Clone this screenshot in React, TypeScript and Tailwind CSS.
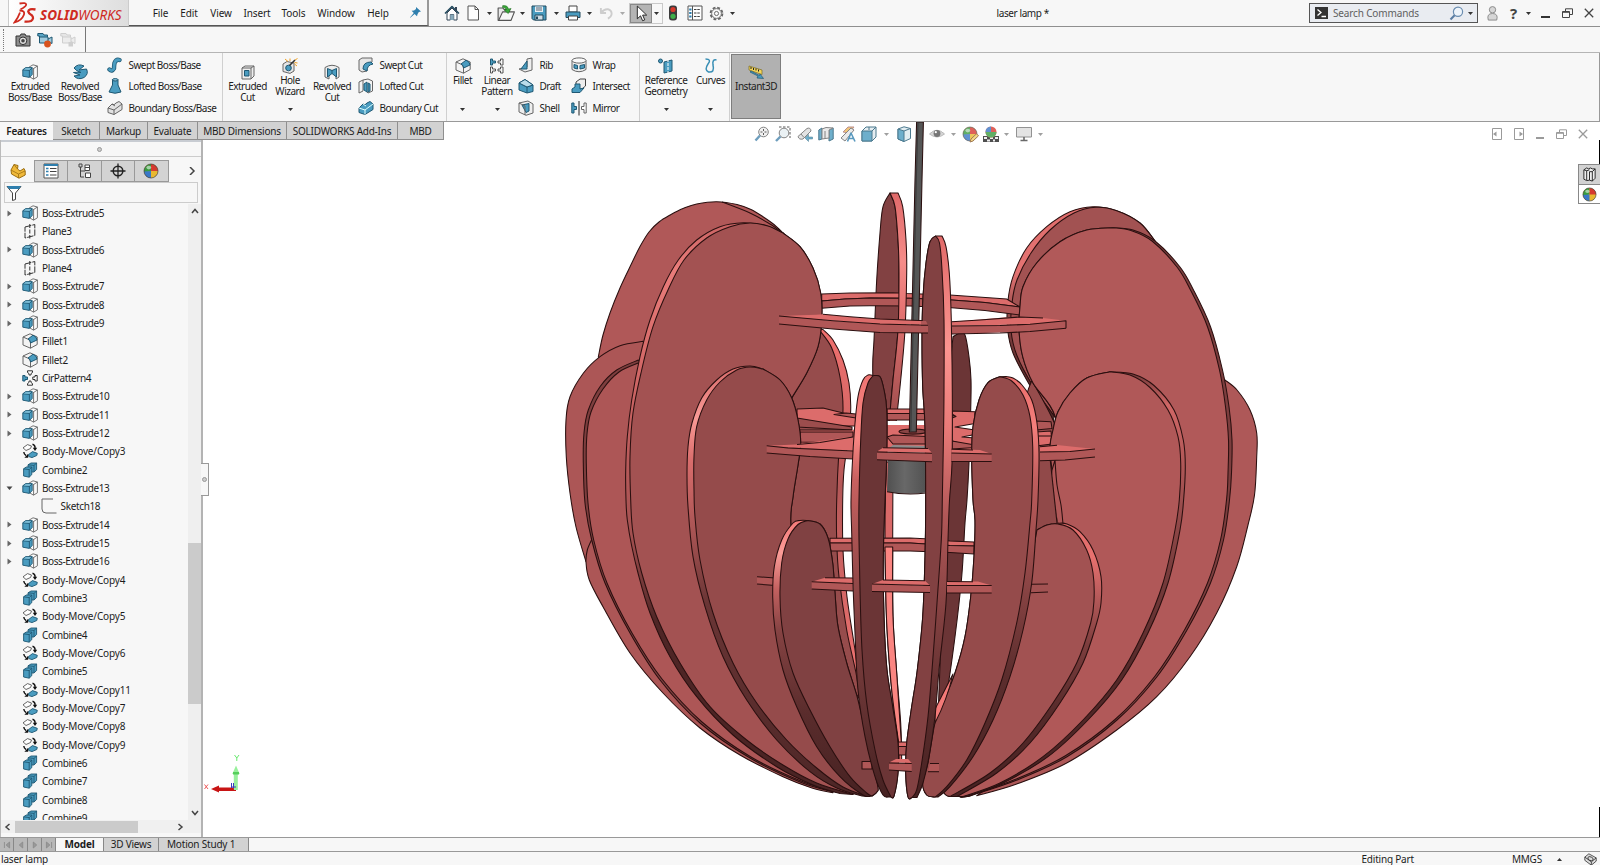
import React from "react";

type Pt = [number, number];

const parse = (s: string): Pt[] =>
  s.trim().split(/\s+/).map((p) => p.split(",").map(Number) as Pt);

/* Catmull-Rom spline through the points, as cubic segments. */
const spline = (p: Pt[], first: "M" | "L") => {
  let d = `${first}${p[0][0]} ${p[0][1]}`;
  for (let i = 0; i < p.length - 1; i++) {
    const a = p[Math.max(i - 1, 0)];
    const b = p[i];
    const c = p[i + 1];
    const e = p[Math.min(i + 2, p.length - 1)];
    const n = (v: number) => v.toFixed(1);
    d += `C${n(b[0] + (c[0] - a[0]) / 6)} ${n(b[1] + (c[1] - a[1]) / 6)} ${n(c[0] - (e[0] - b[0]) / 6)} ${n(c[1] - (e[1] - b[1]) / 6)} ${c[0]} ${c[1]}`;
  }
  return d;
};

/* Region between two curves that both run top to bottom. */
const Area = ({ a, b, fill }: { a: string; b: string; fill: string }) => (
  <path d={spline(parse(a), "M") + spline(parse(b).reverse(), "L") + "Z"} fill={fill} />
);
const Curve = ({ p }: { p: string }) => <path d={spline(parse(p), "M")} fill="none" />;
const Poly = ({ p, fill, line = false }: { p: string; fill: string; line?: boolean }) => (
  <polygon points={p} fill={fill} stroke={line ? "#2a0f0f" : "none"} />
);
const Ln = ({ p }: { p: string }) => <polyline points={p} fill="none" />;

const Grad = ({ id, stops, y1, y2 }: { id: string; stops: [number, string][]; y1: number; y2: number }) => (
  <linearGradient id={id} gradientUnits="userSpaceOnUse" x1="0" x2="0" y1={y1} y2={y2}>
    {stops.map(([o, c]) => (
      <stop key={o} offset={o} stopColor={c} />
    ))}
  </linearGradient>
);

const TOP = "#dc6c6b";
const SIDE = "#b05757";

const L1 = "783,233 774,224.5 763,216.7 751,209.5 737,204.5 716.7,201.7 696.7,204 683,208.5 671,214.5 659,222 649,232 640,246.5 631.7,263.3 620,288 610,313 603,335 598.3,357";
const L2 = "643,341.3 620,345.7 600,356.7 583.3,373.3 570,396.7 566,420 566.3,457 570,493 576,527 586,561.7";
const L0 = "592.3,538.3 587.3,550 586,562 589.3,580 603,606.7 630,653 663,693 700,728 740,755 783,776.7 812,788 833,792.7";
const L3o = "638.3,360 616.7,370 600,386.7 588.3,410 584,433 583.3,463 585,503 591.7,540 605,583 630,633 660,680 700,723 750,758 800,782 833,792";
const L3i = "638.3,363 619,372 603,389 591,412 587,434 586.3,463 588,503 593.7,540 607,583 632,633 662,679 702,722 751,757 801,781 836,792";
const L4o = "783,233 765,225.5 743.3,222.7 720,226.7 696.7,240 678.3,260 663.3,286.7 650,320 640,356.7 631.7,400 627.3,436.7 625.7,470 626,500 627.3,520 631.7,546 638,573 650,613 670,656.7 696.7,696.7 733,735 776.7,766.7 813,785 840,793.5";
const L4i = "783,233 768,226 750,223 730,226.7 706.7,238 684,260 668,290 653,326.7 641.7,370 633,413 630,456.7 630.7,500 633,533 641.7,573 656.7,616.7 680,663 710,706.7 746.7,740 783,765 816.7,783 853,794.5";
const L4r = "783,233 800,246.7 813,268 820.7,293 821.7,320 818,346.7 806.7,373 791.7,398 776,425 776,520 800,620 830,720 853,794.5";
const BLo = "823,329.5 833,340 843,360 849,383 850.7,410 848,440 844,470 842.7,500 843,550 847,596.7 855,650 860,690";
const BLi = "820,331 831.7,348 840,377 843,410 839,450 836.7,500 836.7,540 839,576.7 846.7,630 856,673 860,700";
const L5o = "763,369 750,366 733,369 716.7,380 701.7,398 692,423 688,446.7 687,475 688,506.7 693,556.7 705,606.7 723,656.7 746.7,700 776.7,740 810,771.7 836.7,788 862,796";
const L5i = "763,369 750,367 736.7,370 720,382 706.7,400 696.7,426.7 694,456.7 694,490 695,516.7 700,560 713,613 733,663 756.7,703 786.7,740 816.7,768 843,787 868,796.5";
const L5r = "763,369 780,380 791.7,398 798,420 800.7,443 798,465 793,497 791,527 800,600 830,700 868,796.5";
const L6o = "808,520.5 800,520.5 793,523 781.7,540 774.3,566.7 772.7,597 775,630 783,670 796.7,706.7 816.7,746.7 840,776.7 863,795 872,796";
const L6i = "808,520.5 798,524.5 788,539 781.7,563 780,597 783,633 793,673 810,710 830,746.7 850,776.7 866.7,793 872,796";
const L6r = "808,520.5 820,524 828,538 832.7,563 835,593 838,626.7 846.7,663 858,700 868,745 877.5,785 877,791.7 872,796";
const C1o = "873,375.5 868,375 863,380 858,396.7 855,423 852.7,456.7 851,500 851.7,533 853,583 855,633 858,690 865,736.7 875,776.7 883,795 889,797";
const C1i = "873,375.7 868,383 863,403 860.7,440 859,500 859,540 860,590 862,650 866.7,703 875,750 883,780 891,797";
const C1r = "873,375.7 880,376.7 884,390 886.7,410 886.7,456.7 885,500 883.3,556.7 884,616.7 887,670 892.7,706.7 898,743 898,773 894,796 891,797";
const BTl = "890,193 883,206.7 880,233 876.7,280 874,340 872.7,367 874,420";
const BTm = "890,193 895,206.7 898,240 899,273 898,330 893,380 889,423";
const BTr = "898,193 902.7,206.7 906,240 906.7,273 905,330 900.7,380 896,423";
const C2l = "935.5,236 930,241.7 926,263 923,296.7 922,340 922.7,386.7 925,426.7 925.7,500 925,556.7 922.7,616.7 917.3,670 911.7,706.7 906.7,743 905.7,773 908,797 912,797.5";
const C2m = "935.5,236 939.5,243 942,270 944,320 944,393 943.3,446.7 942.3,500 941.3,540 937,603 932,670 928,716.7 921.7,763 916.7,790 912,797.5";
const C2r = "942,236 946,246.7 949.3,273 951.3,320 952.3,393 952,463 949.5,500 948,540 946,603 939,670 935,716.7 929,756.7 923,783 917,797.5";
const C3 = "953,336.7 960,333 965,335 969,356.7 971,380 970.7,410 969,463 967,500 965,523 961.7,576.7 955,636.7 946.7,693 938,718";
const R5l = "1000,376.7 988,382.7 979,400 973,426.7 971.7,456.7 973,500 975,520 974,556.7 970.7,596.7 965,636.7 955,673 941.7,706.7 935,723 928,763 922.7,783 926.7,795 935,797";
const R5m = "1000,376.7 1011.7,381 1023,395 1030,416.7 1032.7,446.7 1031.7,500 1030,523 1025,573 1016.7,623 1001.7,680 985,723 966.7,760 946.7,786.7 935,797";
const R5r = "1006,376.5 1013,378 1022,385 1031.7,400 1037,423 1039,453 1038,500 1036,530 1031.7,583 1023,630 1010,676.7 993,720 973,756.7 950,786.7 938,797";
const R4b = "1037,530 1015,640 980,730 955,770 943,788 946,795 950,796.5";
const R4m = "1037,530 1047,525 1058,524 1073,530 1086.7,550 1093,573 1094,600 1090.7,623 1076.7,663 1053,703 1023,743 990,773 950,796.5";
const R4r = "1037,530 1047,525 1058,523.3 1067,524 1080,531.7 1093,550 1101,576.7 1101,603 1096.7,623 1083,663 1060,703 1030,743 996.7,773 957,796.5";
const R3l = "1110,371.7 1086.7,378 1070,393 1058,411.7 1053,430 1050,446.7 1052,470 1056,500 1057.7,525 1030,700 975,775 953,794 963,796.5";
const R3m = "1110,371.7 1130,375 1150,387.5 1168,410 1178,436.7 1180.7,463 1179.3,500 1175,530 1163,583 1143,633 1116.7,680 1083,720 1043,756.7 1000,783 963,796.5";
const R3r = "1110,371.7 1133,374 1154,385.5 1174,410 1183.3,440 1185.3,466.7 1183.6,500 1180,530 1168,583 1148,633 1121.7,680 1088,720 1048,756.7 1003,783 967,796.5";
const R2l = "1113,227.7 1086.7,230 1060,241.7 1036.7,263 1023,286.7 1020,306.7 1019,330 1022.7,356.7 1033,383 1055,416 1060,470 1050,640 985,770 960,795 970,796";
const R2r = "1113,227.7 1133,230 1155,241 1180,267 1193.5,290 1210.5,326.7 1222.5,370 1229,406.7 1232,440 1231.5,473 1229.5,500 1223.5,540 1210.5,583 1187,630 1157,676.7 1117,720 1067,756.7 1017,780 970,796";
const R2m = "1113,227.7 1131,230.5 1152,241 1177,267 1190.5,290 1207.5,326.7 1219.5,370 1225.5,406.7 1228.5,440 1228,473 1226.5,500 1220.5,540 1207.5,583 1184.5,630 1154.5,676.7 1115,719.5 1065,756 1015,779.5 968,796";
const R1 = "1225,380 1237,390 1250,410 1256.7,433 1256.7,457 1254.5,495 1248,525 1236.7,566.7 1216.7,613 1190,656.7 1156.7,696.7 1116.7,730 1066.7,763 1016.7,784 976.7,795.7";
const R0o = "1155,241 1140,223 1116.7,210.7 1093,206.7 1070,211.7 1046.7,226.7 1026.7,248 1013,276.7 1007.7,303 1007.7,330 1013,353 1026.7,380 1043,406.7 1053,426.7";
const R0i = "1155,241 1140,223 1116.7,210.7 1096,207.3 1074,213 1050,230 1031,253 1017,280 1012,303 1011,330 1016.7,355 1033,386 1055,417";

const Lamp = () => (
  <svg className="absolute inset-0 h-full w-full" viewBox="203 122 1397 715" preserveAspectRatio="none">
    <defs>
      <Grad id="eTop" y1={193} y2={423} stops={[[0, "#e06a6a"], [0.3, "#f58c89"], [0.5, "#e67473"], [1, "#9c4b4b"]]} />
      <Grad id="eL4" y1={222} y2={793} stops={[[0, "#c76161"], [0.08, "#ea7d7b"], [0.25, "#d36867"], [0.55, "#a35050"], [0.7, "#4f2626"], [1, "#4a2323"]]} />
      <Grad id="eL5" y1={366} y2={796} stops={[[0, "#d66a69"], [0.12, "#fa9a96"], [0.22, "#d96d6c"], [0.4, "#a35151"], [0.55, "#6a3535"], [1, "#4d2626"]]} />
      <Grad id="eL6" y1={520} y2={796} stops={[[0, "#f47a78"], [0.12, "#fb9c98"], [0.25, "#c46160"], [0.4, "#864343"], [0.7, "#5a2c2c"], [1, "#472222"]]} />
      <Grad id="eC1" y1={374} y2={797} stops={[[0, "#ee7472"], [0.15, "#f98783"], [0.25, "#c86160"], [0.5, "#914848"], [0.75, "#6a3535"], [1, "#452121"]]} />
      <Grad id="eC2" y1={236} y2={797} stops={[[0, "#e26a69"], [0.2, "#fb9490"], [0.34, "#ea7a78"], [0.5, "#b05757"], [0.7, "#7d3e3e"], [0.85, "#5a2c2c"], [1, "#472222"]]} />
      <Grad id="eR5" y1={376} y2={797} stops={[[0, "#ea6d6b"], [0.12, "#f47f7c"], [0.25, "#bd5c5c"], [0.5, "#8a4444"], [0.7, "#5d2e2e"], [1, "#472222"]]} />
      <Grad id="eR4" y1={523} y2={796} stops={[[0, "#dd6a69"], [0.12, "#e8716f"], [0.25, "#bd5d5d"], [0.45, "#7c3d3d"], [0.7, "#552a2a"], [1, "#472222"]]} />
      <Grad id="eR3" y1={371} y2={796} stops={[[0, "#6f3737"], [0.08, "#d06766"], [0.25, "#a95454"], [0.45, "#7c3e3e"], [0.7, "#552a2a"], [1, "#472222"]]} />
      <Grad id="eR0" y1={206} y2={426} stops={[[0, "#e06c6b"], [0.3, "#e57473"], [0.55, "#7c3e3e"], [1, "#4a2424"]]} />
      <Grad id="eBL" y1={329} y2={680} stops={[[0, "#f2706e"], [0.25, "#d56766"], [0.45, "#b45858"], [0.7, "#cf6463"], [1, "#f27472"]]} />
      <linearGradient id="drum" x1="0" x2="1"><stop offset="0" stopColor="#505050" /><stop offset=".45" stopColor="#686868" /><stop offset="1" stopColor="#525252" /></linearGradient>
    </defs>
    <g stroke="#2a0f0f" strokeWidth="1.05" strokeLinejoin="round">
      {/* rear upper fins */}
      <Area a={L1} b="783,233 760,260 700,330 640,380 620,380 598.3,357" fill="#b05858" />
      <Curve p="722,202 750,213 770,224 783,233" />
      <Area a={R0o} b="1155,241 1110,300 1060,400 1053,426.7" fill="url(#eR0)" />
      <Area a={R0i} b="1155,241 1110,300 1070,400 1055,417" fill="#a25252" />
      <Area a={BLo} b="820,329 800,370 780,420 780,560 830,650 860,690" fill="url(#eBL)" />
      <Area a={BLi} b="817,331 800,370 780,420 780,560 830,650 860,700" fill="#964c4c" />
      <Area a="1032,380 1026,402 1034,440 1034,530 1036,560" b="1034,384 1056,428 1050,450 1062,520 1062,560" fill="#964c4c" />
      <Ln p="1055,460 1061,505 1062,525" />
      <Ln p="1050,460 1057,510 1058,525" />

      {/* rear upper fin at the centre, with the rings passing through it */}
      <Area a={BTl} b={BTm} fill="#824142" />
      <Poly p="821.7,294 850,293 893,292.7 907,293.5 950,295 1006.7,299 1020,307 985,302.6 951.7,300 910,298.3 870,298 845,298.9 821.7,301" fill={TOP} line />
      <Poly p="821.7,301 845,298.9 870,298 910,298.3 951.7,300 985,302.6 1020,307 1020,315 985,310.5 951.7,307.7 910,306 870,305.8 850,306 821.7,308.3" fill={SIDE} line />
      <Area a={BTm} b={BTr} fill="url(#eTop)" />
      <Area a="953,336.7 945,420 942,500 942,600 938,718" b={C3} fill="#6b3536" />

      {/* light inner strip behind the centre fin */}
      <Area a="886,462 885,540 886.7,623 891.7,690 898,740 899,760" b="893,462 892.7,540 893,616.7 896.7,673 900.7,723 901.7,760" fill="#d96968" />
      <Poly p="830,538.3 910,538 930,539 950,541 974,542 974,546 950,545.5 910,543 830,543" fill={TOP} line />
      <Poly p="830,543 910,543 950,545.5 974,546 974,554 950,552.5 910,551 830,551" fill={SIDE} line />
      <Area a="885,547 886.7,623 891.7,690 899,745" b="892.7,547 893,616.7 896.7,673 901.5,745" fill="#fa8581" />

      {/* centre plate */}
      <Poly p="797,409 823,408 835,411 856,416 856,426 840,426 797,419" fill={TOP} line />
      <Poly p="834,414.5 846,413 856,414 856,418" fill="#b05757" line />
      <Poly p="797,418 852,427 852,430 797,427" fill="#9c4d4d" line />
      <Poly p="800,430 852,430 880,424 955,424 975,430 975,450 887,450 852,445 800,445" fill={TOP} />
      <Ln p="800,430 852,430" />
      <Poly p="800,432 853,432 853,437 838,441 820,442.5 800,442" fill="#b05757" line />
      <Poly p="887,409 927,409 927,413.5 887,413.5" fill={TOP} line />
      <Poly p="887,413.5 927,413.5 927,420 887,420" fill={SIDE} line />
      <Poly p="887,421 927,421 927,425 887,425" fill="#fff" />
      <Poly p="952,411 975,411.7 975,447 952,441" fill={TOP} line />
      <Poly p="955,427 975,423.5 975,430" fill="#fff" line />
      <Poly p="962,437 975,434.5 975,438" fill="#fff" line />
      <Poly p="952,414 956,416.5 952,418" fill="#824142" line />
      <Poly p="952,441 975,445 975,447.5 952,449" fill={SIDE} line />
      <ellipse cx="913" cy="431.5" rx="14" ry="2.6" fill="#8a4545" />
      <Poly p="887,437 893,435 927,436.5 927,444 893,444" fill={SIDE} line />
      <Poly p="893,445 927,446 927,449 889,448" fill="#8b8b8b" />
      <Poly p="1036,421 1051,421.7 1052,428.5 1036,430" fill={SIDE} line />
      <Poly p="1036,432 1051,431 1052,444 1036,446" fill={TOP} line />
      <Ln p="1036,436 1051,436" />

      {/* lamp holder */}
      <path d="M888 459H926V492.5Q906 495.5 887 491.7Z" fill="url(#drum)" stroke="none" />
      <path d="M887 491.7Q906 495.5 926 493" fill="none" />
      <Poly p="916.6,122 923.4,122 922,180 916.3,432 909.3,432 915,180" fill="#555656" line />
      <path d="M918 122L916.3 180L910.8 432" stroke="#3a3a3a" fill="none" />

      {/* bottom disk, rear part */}
      <Poly p="898,742 911,742 911,746.5 898,746.5" fill={TOP} line />
      <Poly p="898,746.5 911,746.5 911,755 898,755" fill={SIDE} line />

      {/* left fins, back to front */}
      <Area a={L2} b="643,341.3 700,420 700,540 600,561" fill="#ac5656" />
      <Area a={L0} b="592.3,538.3 700,540 760,650 833,792.7" fill="#ac5656" />
      <Area a={L3o} b="638.3,360 800,560 833,792" fill="#7d3e3e" />
      <Area a={L3i} b="638.3,363 800,560 836,792" fill="#ad5656" />
      <Area a={L4o} b={L4r} fill="url(#eL4)" />
      <Area a={L4i} b={L4r} fill="#a35252" />
      <Area a={L5o} b={L5r} fill="url(#eL5)" />
      <Area a={L5i} b={L5r} fill="#954b4b" />
      <Poly p="766.7,445.7 796,444.5 845,437.5 853,437 853,451" fill={TOP} />
      <Ln p="797,444.5 820,442.5 853,437" />
      <Poly p="766.7,445.7 788,448 853,451 853,459 810,456.5 766.7,453" fill={SIDE} />
      <Ln p="766.7,445.7 788,448 853,451" />
      <Ln p="766.7,453 810,456.5 853,459" />
      <Poly p="757,576.7 775,578 775,585 757,584" fill={SIDE} />
      <Ln p="757,576.7 775,578" />
      <Ln p="757,584 775,585.5" />
      <Area a={L6o} b={L6r} fill="url(#eL6)" />
      <Area a={L6i} b={L6r} fill="#804142" />
      <Poly p="811.7,581.7 825,577.7 853,578 853,583.5" fill={TOP} />
      <Poly p="811.7,581.7 853,583.5 853,591 811.7,589" fill={SIDE} />
      <Ln p="825,577.7 853,578" />
      <Ln p="811.7,581.7 853,583.5" />
      <Ln p="811.7,589 853,591" />
      <Poly p="779,316 816,314.7 823,314.2 850,316.7 880,319 926,320.7 928,325 880,324 833,320.7" fill={TOP} />
      <Poly p="779,316 833,320.7 880,324 928,325.3 928,333 880,332.5 833,329 779,324" fill={SIDE} />
      <Ln p="823,314.2 850,316.7 880,319 926,320.7" />
      <Ln p="779,316 833,320.7 880,324 928,325.3" />
      <Ln p="779,324 833,329 880,332.5 928,333" />
      <Poly p="862,761.5 872,761.5 872,769 862,769" fill={SIDE} line />

      <Area a={C1o} b={C1r} fill="url(#eC1)" />
      <Area a={C1i} b={C1r} fill="#6b3536" />

      {/* right fins, back to front */}
      <Area a={R1} b="1225,380 1180,500 1100,700 976.7,795.7" fill="#ae5858" />
      <Area a={R2l} b={R2r} fill="#7c3e3e" />
      <Area a={R2l} b={R2m} fill="#b15959" />
      <Area a={R3l} b={R3r} fill="url(#eR3)" />
      <Area a={R3l} b={R3m} fill="#b05858" />
      <Area a="1052,470 1051,490 1056,515 1058,524" b="1055,460 1057,485 1061,505 1063,524" fill="#b05858" />
      <Poly p="1032,458 1050,458 1058,524 1032,532" fill="#914949" />
      <Ln p="1050,458 1057,523" />
      <Area a={R4b} b={R4r} fill="url(#eR4)" />
      <Area a={R4b} b={R4m} fill="#a25252" />
      <Poly p="1040,446.7 1057,445 1095,449 1070,451.5 1040,452" fill={TOP} />
      <Ln p="1040,446.7 1057,445.3" />
      <Poly p="1040,452 1070,451.5 1095,449 1095,457 1065,460 1040,460.7" fill={SIDE} />
      <Ln p="1040,452 1070,451.5 1095,449" />
      <Ln p="1040,460.7 1065,460 1095,457" />
      <Ln p="1031,584.3 1048,584" />
      <Ln p="1031,592.7 1048,592" />
      <Poly p="951.7,321.7 1010,317 1043,318 1066,320.7 1030,324.3 951.7,326" fill={TOP} />
      <Poly p="951.7,326 1030,324.3 1066,320.7 1066,328.3 1030,331.5 951.7,334" fill={SIDE} />
      <Ln p="951.7,321.7 980,320 1020,317 1043,318" />
      <Ln p="951.7,326 1000,325.5 1030,324.3 1066,320.7 1066,328.3" />
      <Ln p="951.7,334 1000,333 1030,331.5 1066,328.3" />
      <Area a={R5l} b={R5r} fill="url(#eR5)" />
      <Area a={R5l} b={R5m} fill="#954b4b" />
      <path d="M953 674L935 709V723Q947 700 953 674Z" fill="#f47a78" />

      {/* front centre fin */}
      <Area a={C2l} b={C2r} fill="url(#eC2)" />
      <Area a={C2l} b={C2m} fill="#824142" />

      {/* ring tabs in front */}
      <Poly p="921,321 926,321 928,325.3 928,333 921,333" fill={SIDE} />
      <Ln p="921,325.2 928,325.3" />
      <Ln p="921,333 928,333" />
      <Poly p="877,451.5 883,447.7 928,448.5 932,453 932,453" fill={TOP} />
      <Poly p="877,452 932,453.3 932,461.7 877,459.7" fill={SIDE} />
      <Ln p="883,447.7 928,448.5" />
      <Ln p="877,452 932,453.3" />
      <Ln p="877,459.7 932,461.7" />
      <Poly p="951.5,449 980,450 991.7,454 951.5,453" fill={TOP} />
      <Poly p="951.5,453 991.7,454 991.7,461.5 951.5,461.5" fill={SIDE} />
      <Ln p="951.5,449.3 973,450" />
      <Ln p="951.5,453 991.7,454" />
      <Ln p="951.5,461.5 991.7,461.5" />
      <Poly p="872,584 883,580 925,580.7 930,585.5" fill={TOP} />
      <Poly p="872,584 930,585.5 930,592.5 872,591.5" fill={SIDE} />
      <Ln p="883,580 925,580.7" />
      <Ln p="872,584 930,585.5" />
      <Ln p="872,591.5 930,592.5" />
      <Poly p="947,581.5 978,581.5 991.7,585.5 947,585.5" fill={TOP} />
      <Poly p="947,585.5 991.7,585.5 991.7,593 947,593" fill={SIDE} />
      <Ln p="947,581.5 973,581.8" />
      <Ln p="947,585.5 991.7,585.5" />
      <Ln p="947,593 991.7,593" />
      <Poly p="889,762.5 896,759 908,759 911.7,763" fill={TOP} />
      <Poly p="889,763 911.7,763.5 911.7,771.5 889,770" fill={SIDE} />
      <Ln p="889,763 911.7,763.5" />
      <Ln p="889,770 911.7,771.5" />
      <Poly p="930,763.5 939,763.5 939,771.7 928,771.7" fill={SIDE} />
      <Ln p="930,763.5 939,763.5" />
      <Ln p="928,771.7 939,771.7" />
    </g>
    {/* orientation triad */}
    <path d="M211 789L219 785.5V787.6H236V791H219V792.6Z" fill="#c81414" />
    <path d="M233.8 788V774H232.3L236 765.5L239.7 774H237.8V790H234Z" fill="#98f09c" />
    <path d="M233 772H239V774.5H233Z" fill="#55cf5b" />
    <path d="M231.5 788V783M233.5 788V783M231 787H236" stroke="#3a3ac0" fill="none" />
    <path d="M234.5 755L236.8 758L239 755M236.8 758V761" stroke="#67e96d" fill="none" />
    <path d="M204.5 784.5L208 789M208 784.5L204.5 789" stroke="#ee5a5a" fill="none" />
  </svg>
);

/* ---------- icons (16 unit grid) ---------- */
type IP = { s?: number; children?: React.ReactNode };
const I = ({ s = 16, children }: IP) => (
  <svg width={s} height={s} viewBox="0 0 16 16" fill="none" strokeLinejoin="round" className="shrink-0">
    {children}
  </svg>
);
const B = "#4a9cc0";
const D = "#1f5873";
const G = "#666";

const Extrude = ({ s }: IP) => (
  <I s={s}>
    <path d="M7 3.2L11 .8L15.4 2V12.8L11.5 15.2L8 13Z" fill="#fafafa" stroke={G} strokeWidth=".9" />
    <path d="M11.6 4.5L15.4 2M11.6 4V15" stroke={G} strokeWidth=".9" />
    <path d="M.8 5.8L3.6 3.6H10.2V10.6L7.4 13.4L.8 12.2Z" fill={B} stroke={D} strokeWidth=".9" />
    <path d="M.8 5.8L7.4 6.4L10.2 3.8M7.4 6.4V13.2" stroke={D} strokeWidth=".9" />
    <path d="M1.6 5.4L4 4.2H9.2L7.2 5.8Z" fill="#8cc6dc" />
  </I>
);
const Plane = () => (
  <I><path d="M3 4L12.8 1.5V12.5L3 15Z" stroke="#333" strokeDasharray="6.5 1" /><path d="M7.8 1V15.5" stroke="#333" strokeDasharray="4 1.5" /></I>
);
const FilletI = ({ s }: IP) => (
  <I s={s}>
    <path d="M1 4L8 .8L15.2 4V11.5L8.5 15.2L1 12Z" fill="#f3f3f3" stroke={G} />
    <path d="M1 4L6 6.2Q8.5 7.5 8.5 10V15.2" stroke={G} />
    <path d="M6 6L11 2.2Q15 3.8 15 7L8.6 10Q8.5 7 6 6Z" fill={B} stroke={D} />
  </I>
);
const CirPattern = () => (
  <I>
    <path d="M.8 5.5H3V7H5.5V9.5H3V11H.8Z" fill={B} stroke={D} />
    <path d="M15.2 5.5H13V7H10.8V9.5H13V11H15.2ZM5.5 .8H10.5V2.5L9 3.5V5H7V3.5L5.5 2.5ZM5.5 15.2H10.5V13.6L9 12.5V11H7V12.5L5.5 13.6Z" stroke="#333" fill="#fff" />
  </I>
);
const MoveCopy = () => (
  <I>
    <path d="M1 4.8L5.5 1.6L9.5 3L8.5 5.5L4 7.5Z" fill="#fff" stroke="#555" strokeWidth=".9" />
    <path d="M6.5 11.6L10.5 8.6L15.3 10.3L14.8 12.5L10 14.6L6.8 13.6Z" fill={B} stroke={D} strokeWidth=".9" />
    <path d="M10.5 1.3Q13.4 2 13 5.5" stroke="#111" strokeWidth="1.4" />
    <path d="M10.8 4.8H15.2L13 8Z" fill="#111" />
    <path d="M1.8 9Q2 11.5 4 12.5" stroke="#111" strokeWidth="1.4" />
    <path d="M2.4 14.8H6.2V10.8Z" fill="#111" />
  </I>
);
const Combine = () => (
  <I>
    <path d="M6 2.8L9 1H14.6V7.5L12 10H6Z" fill={B} stroke={D} strokeWidth=".9" />
    <path d="M6 2.8L12 3.4L14.6 1M12 3.4V9.8" stroke={D} strokeWidth=".9" />
    <path d="M1.6 6.8L4.2 5H9.8V12.6L7.2 15.2L1.6 14Z" fill={B} stroke={D} strokeWidth=".9" />
    <path d="M1.6 6.8L7.2 7.6L9.8 5.2M7.2 7.6V15" stroke={D} strokeWidth=".9" />
  </I>
);
const SketchI = () => (
  <I><path d="M12 1H1V11Q1 15 5 15H15.5" stroke={G} /></I>
);
const Ball = ({ s }: IP) => (
  <I s={s}>
    <circle cx="8" cy="8" r="7" fill="#e8b830" />
    <path d="M8 8L1.2 9.5A7 7 0 0 1 8 1Z" fill="#3a9c3f" />
    <path d="M8 8V1A7 7 0 0 1 15 8Z" fill="#d63a30" />
    <path d="M8 8L1 8.5A7 7 0 0 0 8 15Z" fill="#3a78c8" />
    <circle cx="8" cy="8" r="7" stroke="#444" strokeWidth=".7" />
    <ellipse cx="5.8" cy="4.6" rx="2.4" ry="1.8" fill="#fff" opacity=".55" />
  </I>
);
const Doc = () => (
  <I><path d="M3 1H10L13.5 4.5V15H3Z" fill="#fdfdfd" stroke="#555" /><path d="M10 1V4.5H13.5" stroke="#555" /></I>
);
const Caret = ({ c = "text-[#333]" }: { c?: string }) => (
  <svg width="5" height="3" viewBox="0 0 5 3" className={c}><path d="M0 0H5L2.5 3Z" fill="currentColor" /></svg>
);
const Restore = () => (
  <svg width="11" height="10" viewBox="0 0 11 10" fill="none" stroke="currentColor"><path d="M.5 3.5H7.5V9.5H.5ZM3.5 3V.8H10.5V6.5H8M.5 4.3H7.5" /></svg>
);
const Cross = () => (
  <svg width="10" height="10" viewBox="0 0 10 10" stroke="currentColor" strokeWidth="1.3"><path d="M.8 .8L9.2 9.2M9.2 .8L.8 9.2" /></svg>
);
const Cell = ({ w, children }: { w: string; children?: React.ReactNode }) => (
  <div className={`flex h-full shrink-0 items-center justify-center ${w}`}>{children}</div>
);

/* ---------- title bar ---------- */
const TitleBar = () => (
  <div className="flex h-[27px] shrink-0 items-center border-b border-[#8f8f8f]">
    <div className="ml-[8px] flex h-full w-[121px] items-center border-x border-[#ccc] bg-gradient-to-r from-white to-[#dedede] pl-[4px]">
      <svg width="24" height="24" viewBox="0 0 24 24" fill="none" stroke="#cf2a1f" strokeWidth="1.8" className="shrink-0">
        <path d="M6.5 2.5Q13 1.2 13.2 3.5Q13 5.8 7.5 8.2" />
        <path d="M6.5 9.5Q12.5 9.5 10.8 14Q8.8 19.5 1.5 21.5Q5.5 16 7 11.5" />
        <path d="M22.5 8.5Q15.5 7.2 15.2 10.5Q15.5 12.5 19 14.5Q21.5 17.5 18 20Q15.5 21 11.5 20.6" strokeWidth="2.3" />
      </svg>
      <span className="ml-[3px] mt-[6px] text-[13.5px] italic leading-none tracking-[0px] text-[#cf2a1f]"><b>SOLID</b>WORKS</span>
    </div>
    <div className="flex h-full w-[300px] items-center border-b border-r-2 border-b-[#555] border-r-[#999] pl-[18px] tracking-[-0.1px]">
      <Cell w="w-[27px]">File</Cell>
      <Cell w="w-[30px]">Edit</Cell>
      <Cell w="w-[34px]">View</Cell>
      <Cell w="w-[38px]">Insert</Cell>
      <Cell w="w-[35px]">Tools</Cell>
      <Cell w="w-[50px]">Window</Cell>
      <Cell w="w-[34px]">Help</Cell>
      <Cell w="w-[40px]">
        <svg width="11" height="11" viewBox="0 0 11 11"><path d="M6 0L11 4.5L8.8 5L7.5 7.2L7 9.3L4.6 6.9L.3 10.8L0 10.5L3.8 6L1.6 3.8L4 3.4L6 2Z" fill="#2f7fae" /></svg>
      </Cell>
    </div>
    <div className="flex h-full items-center pl-[14.5px]">
      <Cell w="w-[16px]"><I><path d="M1 8.5L8 1.5L15 8.5" stroke="#234a5e" strokeWidth="1.6" /><path d="M3 8V15H6.3V9.5H9.7V15H13V8L8 3Z" fill="#fff" stroke="#345" /><path d="M11 2V4.5L13 6.5V2Z" fill="#345" /><path d="M6.3 15V9.5H9.7V15Z" fill="#8ab" /></I></Cell>
      <Cell w="w-[27px]"><Doc /></Cell>
      <Cell w="w-[6px]"><Caret /></Cell>
      <Cell w="w-[27.3px]"><I s={18}><path d="M1 14.5V3.5H5L6.5 5H11V14.5Z" fill="#e9e9e9" stroke="#555" /><path d="M1.5 14.5L5 7H15.5L12.5 14.5Z" fill="#f7f7f7" stroke="#555" /><path d="M5 1.5Q9.5 1 10.2 4.5L12.5 4L10 8.5L6.5 5.5L8.3 5Q7.8 3 5 3.2Z" fill="#3aa83a" stroke="#1c6a1c" strokeWidth=".5" /></I></Cell>
      <Cell w="w-[6px]"><Caret /></Cell>
      <Cell w="w-[27.3px]"><I><path d="M1 1H15V15H2.5L1 13.5Z" fill={B} stroke="#234a5e" /><path d="M4 1.5H12V7H4Z" fill="#e9eef2" /><path d="M5 3H11M5 5H11" stroke="#567" /><path d="M4 10H12V15H4Z" fill="#cfdde6" stroke="#234a5e" /><path d="M6 11.5V14" stroke="#234a5e" strokeWidth="2" /></I></Cell>
      <Cell w="w-[6px]"><Caret /></Cell>
      <Cell w="w-[27.3px]"><I><path d="M4 1H12V7H4Z" fill="#fff" stroke="#444" /><path d="M1 7H15V12.5H1Z" fill={B} stroke="#234a5e" /><path d="M3.5 11H12.5V15H3.5Z" fill="#fff" stroke="#444" /></I></Cell>
      <Cell w="w-[6px]"><Caret /></Cell>
      <Cell w="w-[27.3px]"><I s={15}><path d="M2 2V7.5H7.5M2.5 7Q5.5 3 9.5 3.5Q13.5 4.5 13.5 8.5Q13.2 11.5 9.5 13.5" stroke="#cdcdcd" strokeWidth="2" /></I></Cell>
      <Cell w="w-[6px]"><Caret c="text-[#aaa]" /></Cell>
      <div className="ml-[3px] flex h-[21px] w-[34px] border border-[#c9c9c9]">
        <div className="flex w-[22px] items-center justify-center border border-[#888] bg-[#b4b4b4]"><I s={17}><path d="M5 1V13L8 10.2L10 14.8L12 14L10 9.5H13.8Z" fill="#fff" stroke="#222" strokeWidth=".9" /></I></div>
        <div className="flex flex-1 items-center justify-center"><Caret /></div>
      </div>
      <Cell w="w-[21px]"><I><rect x="4" y=".5" width="8" height="15" rx="3" fill="#3c3c3c" /><circle cx="8" cy="4.5" r="2.6" fill="#d8392c" /><circle cx="8" cy="11.3" r="2.6" fill="#3fae49" /></I></Cell>
      <Cell w="w-[22px]"><I><path d="M1 1H15V15H1Z" fill="#fff" stroke="#555" /><path d="M5.5 1V15" stroke="#555" /><path d="M2.2 4.5H4.5M2.2 8H4.5M2.2 11.5H4.5" stroke="#2f7fae" strokeWidth="1.8" /><path d="M7 4.5H13.5M7 8H13.5M7 11.5H13.5" stroke="#444" strokeWidth="1.2" strokeDasharray="2.5 .8" /></I></Cell>
      <Cell w="w-[22px]"><I s={15}><circle cx="8" cy="8" r="6.3" stroke="#666" strokeWidth="2" strokeDasharray="3 1.95" /><circle cx="8" cy="8" r="5.2" stroke="#666" fill="#fafafa" /><circle cx="8" cy="8" r="2.2" stroke="#666" /></I></Cell>
      <Cell w="w-[10px]"><Caret /></Cell>
    </div>
    <div className="ml-[255px] w-[60px] text-center tracking-[-0.4px]">laser lamp *</div>
    <div className="ml-auto flex h-full items-center text-[#444]">
      <div className="flex h-[20px] w-[169px] items-center border border-[#555] bg-[#e9ecf1] pl-[5px]">
        <svg width="13" height="12" viewBox="0 0 13 12"><path d="M0 0H13V12H0Z" fill="#333" /><path d="M2.5 2.5L6 5.5L2.5 8.5M6.5 9.5H11" stroke="#fff" strokeWidth="1.3" fill="none" /></svg>
        <span className="ml-[5px] flex-1 tracking-[-0.15px] text-[#606060]">Search Commands</span>
        <svg width="15" height="15" viewBox="0 0 15 15" fill="none"><circle cx="9" cy="5.8" r="4.6" stroke="#6a8db0" strokeWidth="1.2" fill="#eef4fa" /><path d="M5.6 9.2L1.5 13.5" stroke="#5b7ea3" strokeWidth="2" /></svg>
        <div className="flex w-[13px] justify-center"><Caret /></div>
      </div>
      <Cell w="w-[28px]"><I s={15}><circle cx="8" cy="4" r="3.4" fill="#d6d6d6" stroke="#888" /><path d="M3.5 15Q1.5 8 8 8Q14.5 8 12.5 15Z" fill="#d6d6d6" stroke="#888" /></I></Cell>
      <Cell w="w-[15px]"><span className="text-[15px] font-bold">?</span></Cell>
      <Cell w="w-[15px]"><Caret /></Cell>
      <Cell w="w-[19px]"><div className="mt-[8px] h-[2px] w-[9px] bg-[#333]" /></Cell>
      <Cell w="w-[24px]"><Restore /></Cell>
      <Cell w="w-[20px]"><Cross /></Cell>
      <div className="w-[1px]" />
    </div>
  </div>
);

const CaptureBar = () => (
  <div className="flex h-[26px] shrink-0 items-center border-b border-[#b5b5b5]">
    <div className="ml-[3px] h-[22px] w-0 border-l border-dotted border-[#777]" />
    <div className="flex h-full w-[82px] items-center border-r border-[#777] pl-[10px]">
      <Cell w="w-[17px]"><I><path d="M1 4H5L6 2H10L11 4H15V14H1Z" fill="#8d8d8d" stroke="#333" /><circle cx="8" cy="8.8" r="3.8" fill="#ddd" stroke="#333" /><circle cx="8" cy="8.8" r="1.8" fill="#444" /></I></Cell>
      <Cell w="w-[28px]"><I><path d="M.8 1.5H6L7 3H10.5V10H2.5V4H.8Z" fill="#5aa6c6" stroke={D} /><path d="M2.5 5H11V11H2.5ZM11 7L15 5V11.5L11 9.5" fill="#9fcadd" stroke={D} /><circle cx="10.5" cy="12" r="3.4" fill="#d9531e" /></I></Cell>
      <Cell w="w-[17px]"><I><path d="M.8 1.5H6L7 3H10.5V10H2.5V4H.8Z" fill="#e6e6e6" stroke="#cfcfcf" /><path d="M2.5 5H11V11H2.5ZM11 7L15 5V11.5L11 9.5" fill="#ececec" stroke="#cfcfcf" /><path d="M8.5 10H13V14.5H8.5Z" fill="#cfcfcf" /></I></Cell>
    </div>
  </div>
);

/* ---------- ribbon ---------- */
const Big = ({ w, icon, lines, high = false, arrow = false }: { w: string; icon: React.ReactNode; lines: string[]; high?: boolean; arrow?: boolean }) => (
  <div className={`flex h-full shrink-0 flex-col items-center ${high ? "pt-[5px]" : "pt-[11px]"} ${w}`}>
    {icon}
    <div className="mt-[1px] text-center leading-[11px]">
      {lines.map((l) => (
        <div key={l} className="whitespace-nowrap">{l}</div>
      ))}
    </div>
    {arrow && <div className="mt-auto mb-[10px]"><Caret /></div>}
  </div>
);
const Small = ({ icon, label }: { icon: React.ReactNode; label: string }) => (
  <div className="flex h-[21.6px] items-center gap-[5.5px]">
    {icon}
    <span className="whitespace-nowrap">{label}</span>
  </div>
);
const Stack = ({ w, children }: { w: string; children: React.ReactNode }) => (
  <div className={`flex shrink-0 flex-col pt-[1px] ${w}`}>{children}</div>
);
const Sep = () => <div className="h-full w-px shrink-0 bg-[#d0d0d0]" />;

const Ribbon = () => (
  <div className="flex h-[69px] shrink-0 border-b border-r border-[#999] tracking-[-0.5px]">
    <Big w="ml-[5px] w-[50px]" icon={<Extrude />} lines={["Extruded", "Boss/Base"]} />
    <Big w="w-[50px]" icon={<I><path d="M2 4Q6 -1 12 2L7 6L14.5 5Q17 10 12 13.5Q6 16.5 2 12L8 11L1.5 8.5Q5 8 9 8.5Q4 7 2 4Z" fill={B} stroke={D} /></I>} lines={["Revolved", "Boss/Base"]} />
    <Stack w="w-[117px] pl-[2px]">
      <Small icon={<I><path d="M2.5 12.5Q5 15 7 11.5Q7 9 7.5 6Q9 2 12.5 3" stroke={D} strokeWidth="4.4" strokeLinecap="round" /><path d="M2.5 12.5Q5 15 7 11.5Q7 9 7.5 6Q9 2 12.5 3" stroke={B} strokeWidth="2.8" strokeLinecap="round" /></I>} label="Swept Boss/Base" />
      <Small icon={<I><path d="M5.5 1.5H11V7L14 14Q8 16.5 2 14L5.5 7Z" fill={B} stroke={D} /><ellipse cx="8.2" cy="1.8" rx="2.8" ry="1.2" fill="#8cc6dc" stroke={D} /></I>} label="Lofted Boss/Base" />
      <Small icon={<I><path d="M1 8L5 4Q7 6 9 3L12 1.5L15 4V9.5L7 14.5L1 12.5Z" fill="#e2e2e2" stroke={G} /><path d="M1 8L7 10L15 4M7 10V14.5M5 4L8 6" stroke={G} /></I>} label="Boundary Boss/Base" />
    </Stack>
    <Sep />
    <Big w="w-[49px]" icon={<I><path d="M2 4L5 2H14V12L11 15H2Z" fill="#eee" stroke={G} /><path d="M2 4H11V15M11 4L14 2" stroke={G} /><path d="M4.5 6.5H9V12H4.5Z" fill={B} stroke={D} /></I>} lines={["Extruded", "Cut"]} />
    <Big high arrow w="w-[36px]" icon={<I><path d="M1 6L5 3.5L12 5V13L8 15.4L1 13.5Z" fill="#e6e6e6" stroke={G} /><circle cx="6.5" cy="10" r="2.8" fill={B} stroke={D} /><path d="M7.5 7.5L13 2" stroke="#333" strokeWidth="1.6" /><path d="M3 1L6 3.5M8 .5V3M15.5 5L12.5 4.5M15.5 .5L13 2M15 8L12.5 6" stroke="#f0a020" /></I>} lines={["Hole", "Wizard"]} />
    <Big w="w-[48px]" icon={<I><path d="M1 3.5Q8 -1 15 3.5V13L12 15V8Q8 5 5 8V15L1 13Z" fill="#eee" stroke={G} /><path d="M3.5 4.5L8 6.5L12.5 4.5V13L8 9.5L3.5 13Z" fill={B} stroke={D} /><path d="M8 6.5V9.5" stroke={D} /></I>} lines={["Revolved", "Cut"]} />
    <Stack w="w-[90px] pl-[2px]">
      <Small icon={<I><path d="M1 3L4 1H14V5L9 8V14L4 15L1 13Z" fill="#e6e6e6" stroke={G} /><path d="M5 12Q5 5 13 5L15 7Q9 8 9 14Z" fill={B} stroke={D} /></I>} label="Swept Cut" />
      <Small icon={<I><path d="M1 4L5 2V13L1 15ZM5 2L10 1L14.5 3V13L10 15L9 14" fill="#f3f3f3" stroke={G} /><path d="M6 6L9 4V14L6 12ZM10 5L12 6V13L10 14Z" fill={B} stroke={D} /></I>} label="Lofted Cut" />
      <Small icon={<I><path d="M1 8L5 4Q7 6 9 3L12 1.5L15 4V9.5L7 14.5L1 12.5Z" fill={B} stroke={D} /><path d="M1 8L7 10L15 4M7 10V14.5M5 4L8 6" stroke="#dff" /></I>} label="Boundary Cut" />
    </Stack>
    <Sep />
    <Big high arrow w="w-[31px]" icon={<FilletI />} lines={["Fillet"]} />
    <Big high arrow w="w-[38px]" icon={<I><path d="M1.5 1H3.5V3H6.5V5H3.5V7H1.5Z" fill={B} stroke={D} /><path d="M9 3H11.5V1H14V7H11.5V5H9ZM1.5 9H3.5V11H6.5V13H3.5V15H1.5ZM9 11H11.5V9H14V15H11.5V13H9Z" stroke="#555" /></I>} lines={["Linear", "Pattern"]} />
    <Stack w="w-[55px] pl-[2px]">
      <Small icon={<I><path d="M1 12L9 10V2L14 1V13L7 15Z" fill="#eee" stroke={G} /><path d="M3 12L9 4V12Z" fill={B} stroke={D} /></I>} label="Rib" />
      <Small icon={<I><path d="M1 5L7 1.5L15 7V13.5L9 15L1 12Z" fill={B} stroke={D} /><path d="M1 5L9 9L15 7M9 9V15" stroke={D} /><path d="M1 5L7 1.5L15 7L9 9Z" fill="#b9dcea" stroke={D} /></I>} label="Draft" />
      <Small icon={<I><path d="M1 3L10 1L15 4V13L8 15.3L1 12Z" fill="#eee" stroke={G} /><path d="M4 5L11 3.5V11L8 12.5Z" fill={B} stroke={D} /><path d="M1 3L7 6V15" stroke={G} /></I>} label="Shell" />
    </Stack>
    <Stack w="w-[68px]">
      <Small icon={<I><path d="M1 3.5V12.5Q8 17 15 12.5V3.5" fill="#eee" stroke={G} /><ellipse cx="8" cy="3.5" rx="7" ry="2.6" fill="#fafafa" stroke={G} /><path d="M3 7.5L6.5 8.5V12L3 11ZM9 8.5L13.5 7.5V11L9 12Z" fill={B} stroke={D} /></I>} label="Wrap" />
      <Small icon={<I><path d="M5 4L9 1H14.5V8L11 11H5Z" fill="#eee" stroke="#444" /><path d="M1 11L4 9V6H9V11L13 10L9 14.5H1Z" fill={B} stroke={D} /></I>} label="Intersect" />
      <Small icon={<I><path d="M.8 3H3V6.5H5.5V9.5H3V13H.8Z" fill={B} stroke={D} /><path d="M15.2 3H13V6.5H10.5V9.5H13V13H15.2Z" stroke={G} fill="#fff" /><path d="M8 1V15.5" stroke="#222" /></I>} label="Mirror" />
    </Stack>
    <Sep />
    <Big high arrow w="w-[52px]" icon={<I><circle cx="2.5" cy="3" r="2" fill={B} stroke={D} /><path d="M6 4L14 2V13L6 15Z" fill={B} stroke={D} /><path d="M10 1V16" stroke="#fff" strokeDasharray="3 1" /></I>} lines={["Reference", "Geometry"]} />
    <Big high arrow w="w-[37px]" icon={<I><path d="M2.5 1Q9 1 5 6Q1 12 5.5 14Q12 15 10 7Q9 1 13.5 2" stroke="#3a8fb5" strokeWidth="1.5" /></I>} lines={["Curves"]} />
    <Sep />
    <div className="ml-[1px] mt-px h-[65px] w-[50px] border border-[#7d7d7d] bg-[#b1b1b1]">
      <div className="flex flex-col items-center pt-[8.5px]">
        <I><path d="M1 2L14 6V10.5L1 6Z" fill="#f4d65a" stroke="#7a6a20" strokeWidth=".7" /><path d="M3 3V5M5.5 4V6M8 4.5V6.5M10.5 5.5V7.5" stroke="#222" /><path d="M2 8L10 12L9 14L15.5 14.5L12 10L11.5 11.5L3 7Z" fill={B} stroke={D} strokeWidth=".7" /></I>
        <div className="mt-[1px] leading-[11px]">Instant3D</div>
      </div>
    </div>
  </div>
);

const Tabs = () => (
  <div className="relative flex h-[18px] w-[444px] shrink-0 bg-[#f7f7f7] text-[10px] tracking-[-0.25px]">
    <div className="flex w-[53px] items-center justify-center font-semibold">Features</div>
    {[
      ["Sketch", "w-[47px]"],
      ["Markup", "w-[48px]"],
      ["Evaluate", "w-[50px]"],
      ["MBD Dimensions", "w-[89px]"],
      ["SOLIDWORKS Add-Ins", "w-[111px]"],
      ["MBD", "w-[46px]"],
    ].map(([t, w]) => (
      <div key={t} className={`flex shrink-0 items-center justify-center whitespace-nowrap border-b border-r border-[#8f8f8f] bg-[#d2d2d2] ${w}`}>{t}</div>
    ))}
  </div>
);

/* ---------- feature tree ---------- */
const ROWS =
  "E5 P3 E6 P4 E7 E8 E9 F1 F2 C4 E10 E11 E12 M3 K2 O13 S18 E14 E15 E16 M4 K3 M5 K4 M6 K5 M11 M7 M8 M9 K6 K7 K8 K9".split(" ");
const KIND: Record<string, [string, () => React.ReactNode, string]> = {
  E: ["Boss-Extrude", () => <Extrude />, "tracking-[-0.43px]"],
  O: ["Boss-Extrude", () => <Extrude />, "tracking-[-0.43px]"],
  P: ["Plane", () => <Plane />, "tracking-[-0.35px]"],
  F: ["Fillet", () => <FilletI />, "tracking-[-0.3px]"],
  C: ["CirPattern", () => <CirPattern />, "tracking-[-0.4px]"],
  M: ["Body-Move/Copy", () => <MoveCopy />, "tracking-[-0.15px]"],
  K: ["Combine", () => <Combine />, "tracking-[-0.35px]"],
  S: ["Sketch", () => <SketchI />, "tracking-[-0.35px]"],
};
const Tree = () => (
  <div className="min-h-0 flex-1 overflow-hidden">
    {ROWS.map((r) => {
      const [name, icon, track] = KIND[r[0]];
      return (
        <div key={r} className="flex h-[18.34px] items-center">
          <div className={`flex shrink-0 items-center ${r[0] === "S" ? "w-[39.5px]" : "w-[21px]"}`}>
            {r[0] === "E" && <svg width="5" height="7" className="ml-[6px]"><path d="M.5 .5L4.5 3.5L.5 6.5Z" fill="#666" /></svg>}
            {r[0] === "O" && <svg width="7" height="5" className="ml-[5px]"><path d="M.5 .5H6.5L3.5 4Z" fill="#444" /></svg>}
          </div>
          {icon()}
          <span className={`ml-[4px] whitespace-nowrap ${track}`}>{name + r.slice(1)}</span>
        </div>
      );
    })}
  </div>
);
const Chevron = ({ d }: { d: string }) => (
  <svg width="8" height="8" viewBox="0 0 8 8" fill="none" stroke="#444" strokeWidth="1.5"><path d={d} /></svg>
);
const PanelTab = ({ active = false, children }: { active?: boolean; children: React.ReactNode }) => (
  <div className={`flex h-full shrink-0 items-center justify-center border-r border-[#999] ${active ? "w-[34px] pl-[1px]" : "w-[33.4px] border-b border-t bg-[#d3d3d3]"}`}>{children}</div>
);

const Sidebar = () => (
  <div className="relative flex w-[203px] shrink-0 flex-col border-l border-r-2 border-l-[#bbb] border-r-[#b3b3b3] bg-[#f7f7f7]">
    <div className="flex h-[17px] shrink-0 items-center justify-center border-b border-t-2 border-b-[#ccc] border-t-[#c8ccd2] pr-[3px]">
      <div className="h-[5px] w-[5px] rounded-full border border-[#999] bg-[#ccc]" />
    </div>
    <div className="mt-[3px] flex h-[22px] shrink-0 items-center border-[#bbb]">
      <PanelTab active><I><path d="M1 7L4 1.5L8 2.5L7.5 6L10 8L14 5.5L15.2 8V12L9 15.2L1.5 11Z" fill="#f0b93a" stroke="#9c6f12" /><path d="M1 7L8.5 11L15 8M8.5 11V15M4 1.5L7.5 6" stroke="#9c6f12" strokeWidth=".8" /></I></PanelTab>
      <PanelTab><I><path d="M1 1H15V15H1Z" fill="#fff" stroke="#555" /><path d="M1 2H15" stroke="#2f7fae" strokeWidth="2" /><path d="M3 5.5H5.5M3 8.5H5.5M3 12H5.5" stroke="#2f7fae" strokeWidth="1.6" /><path d="M7 5.5H13.5M7 8.5H13.5M7 12H13.5" stroke="#444" /></I></PanelTab>
      <PanelTab><I><path d="M2 1H5V4H2ZM3.5 4V14M3.5 14H7M3.5 8H8" stroke="#444" /><path d="M8 2H12.5V7.5H8ZM8.5 10H13.5V14.5H8.5Z" stroke="#444" fill="#fff" /><path d="M8 4.5H12.5" stroke="#444" /></I></PanelTab>
      <PanelTab><I><circle cx="8" cy="8" r="4.8" stroke="#222" strokeWidth="1.5" /><path d="M8 .5V15.5M.5 8H15.5" stroke="#222" strokeWidth="1.3" /></I></PanelTab>
      <PanelTab><Ball /></PanelTab>
      <div className="ml-auto mr-[5px]"><Chevron d="M2 0L6 4L2 8" /></div>
    </div>
    <div className="ml-[3px] mr-[3px] flex h-[21px] shrink-0 items-center border border-[#ccc] pl-[1px]">
      <I><path d="M1 1.5H15L9.5 8V14.5L6.5 15.5V8Z" fill="#fff" stroke="#444" /><path d="M1 1H15L13 4H3Z" fill="#2f7fae" /></I>
    </div>
    <div className="mt-[1px] flex min-h-0 flex-1">
      <Tree />
      <div className="flex w-[13px] shrink-0 flex-col items-center bg-[#efefef] pt-[3px]">
        <Chevron d="M1 6L4 2.5L7 6" />
        <div className="mt-[328px] h-[161px] w-full bg-[#cbcbcb]" />
        <div className="mb-[3px] mt-auto flex"><Chevron d="M1 2L4 5.5L7 2" /></div>
      </div>
    </div>
    <div className="flex h-[13px] shrink-0 items-center bg-[#f0f0f0] pl-[3px]">
      <Chevron d="M5.5 1L2 4L5.5 7" />
      <div className="ml-[3px] h-[12px] w-[123px] bg-[#cbcbcb]" />
      <div className="ml-auto mr-[17px] flex"><Chevron d="M2.5 1L6 4L2.5 7" /></div>
    </div>
    <div className="h-[4px] shrink-0" />
    {/* collapse handle */}
    <div className="absolute -right-[8px] top-[323px] flex h-[33px] w-[8px] items-center justify-center border border-l-0 border-[#999] bg-[#f7f7f7]">
      <div className="h-[5px] w-[5px] rounded-full border border-[#999] bg-[#ccc]" />
    </div>
  </div>
);

/* ---------- view toolbar ---------- */
const Hud = () => (
  <div className="absolute left-[751px] top-[0px] flex h-[24px] items-center opacity-80">
    <Cell w="w-[21.5px]"><I><circle cx="9.5" cy="6" r="4.8" fill="#eee" stroke={G} /><path d="M9.5 3V9M6.5 6H12.5" stroke="#333" strokeDasharray="2 2" /><path d="M6 9.5L1.5 14.5" stroke="#4a86ad" strokeWidth="2.4" /></I></Cell>
    <Cell w="w-[21.5px]"><I><path d="M4 1H15V12" stroke="#333" strokeDasharray="2.5 1.5" /><circle cx="9" cy="7" r="4.8" fill="#e6eef2" stroke={G} /><path d="M5.5 10.5L1 15" stroke="#4a86ad" strokeWidth="2.4" /></I></Cell>
    <Cell w="w-[21.5px]"><I><path d="M1 10.5L10 2.5Q13.5 1 14 5L6 13Q2 14 1 10.5Z" fill="#ddd" stroke={G} /><path d="M4 8L7 11.5" stroke={G} /><path d="M8 12L11.5 8.5V11H15.5V13H11.5V15.5Z" fill={B} stroke={D} strokeWidth=".5" /></I></Cell>
    <Cell w="w-[21.5px]"><I><path d="M.8 4L4 2V13L.8 14ZM11 4L15.2 2V13L11 15Z" fill={B} stroke={D} /><path d="M4 3L8 1.5L15 2L11 4V12L4 13Z" fill="#e5e5e5" stroke={G} /><path d="M7 5V13" stroke={G} /></I></Cell>
    <Cell w="w-[21.5px]"><I><path d="M3 6L8 1H14L9 7Z" fill="#f0b858" stroke="#a77" /><path d="M1 12L11 2L14 4L5 15Z" fill="#e5e5e5" stroke={G} /><path d="M7.5 15.5L11 7L15 15.5M9 12.5H13.5" stroke="#2f7fae" strokeWidth="1.6" /></I></Cell>
    <Cell w="w-[21.5px]"><I><path d="M1 5L5 1H15V11L11 15H1Z" fill="#dfe9ee" stroke={D} /><path d="M1 5H11V15H1Z" fill={B} stroke={D} /><path d="M11 5L15 1M8 1V4" stroke={D} /></I></Cell>
    <Cell w="w-[12px]"><Caret c="text-[#888]" /></Cell>
    <Cell w="w-[24px]"><I><path d="M2 3L8 .8L14.5 2.5V12.5L8 15.5L2 13Z" fill="#dceaf0" stroke={D} /><path d="M2 3L8 5V15.5L2 13Z" fill={B} stroke={D} /><path d="M8 5L14.5 2.5" stroke={D} /></I></Cell>
    <Cell w="w-[9px]" />
    <Cell w="w-[24px]"><I><path d="M.5 8Q8 .5 15.5 8Q8 14 .5 8Z" fill="#ccc" stroke="#aaa" /><circle cx="8" cy="7.5" r="3.4" fill="#555" /><circle cx="6.8" cy="6.2" r="1.1" fill="#fff" /></I></Cell>
    <Cell w="w-[8px]"><Caret c="text-[#888]" /></Cell>
    <Cell w="w-[25px]"><div className="relative flex"><Ball /><svg width="10" height="10" viewBox="0 0 10 10" className="absolute -bottom-px -right-px"><path d="M1 9L2 6L7.5 .8L9.5 2.8L4 8Z" fill="#f2cf6a" stroke="#8a5a2a" /></svg></div></Cell>
    <Cell w="w-[18px]"><I><path d="M0 10H16V16H0Z" fill="#222" /><path d="M1 11H4V13H1ZM7 11H10V13H7ZM12 11H15V13H12ZM4 13.5H7V15.5H4ZM10 13.5H12V15.5H10Z" fill="#eee" /><circle cx="8" cy="6" r="5.5" fill="#d63a30" /><path d="M8 6L2.5 6A5.5 5.5 0 0 1 8 .5Z" fill="#3a78c8" /><path d="M8 6H13.5A5.5 5.5 0 0 1 2.5 6Z" fill="#3a9c3f" /></I></Cell>
    <Cell w="w-[13px]"><Caret c="text-[#888]" /></Cell>
    <Cell w="w-[22px]"><I><path d="M.5 1.5H15.5V11H.5Z" fill="#ddd" stroke="#777" /><path d="M8 11V14M4.5 14.5H11.5" stroke="#444" strokeWidth="1.6" /></I></Cell>
    <Cell w="w-[10px]"><Caret c="text-[#888]" /></Cell>
  </div>
);

const DocControls = () => (
  <div className="absolute right-[6px] top-[0px] flex h-[24px] items-center text-[#9a9a9a]">
    <Cell w="w-[21.5px]"><svg width="10" height="12" viewBox="0 0 10 12" fill="none" stroke="currentColor"><path d="M.5 .5H9.5V11.5H.5Z" /><path d="M4.5 3.5V8.5L1 6Z" fill="currentColor" stroke="none" /></svg></Cell>
    <Cell w="w-[21.5px]"><svg width="10" height="12" viewBox="0 0 10 12" fill="none" stroke="currentColor"><path d="M.5 .5H9.5V11.5H.5Z" /><path d="M5.5 3.5V8.5L9 6Z" fill="currentColor" stroke="none" /></svg></Cell>
    <Cell w="w-[21.5px]"><div className="mt-[7px] h-[2px] w-[8px] bg-[#9a9a9a]" /></Cell>
    <Cell w="w-[21.5px]"><Restore /></Cell>
    <Cell w="w-[21.5px]"><Cross /></Cell>
  </div>
);

const BottomTabs = () => (
  <div className="flex h-[14px] shrink-0 border-t border-[#999] tracking-[-0.2px]">
    {["M4 3V10M10 3L6 6.5L10 10Z", "M9 3L5 6.5L9 10Z", "M5 3L9 6.5L5 10Z", "M10 3V10M4 3L8 6.5L4 10Z"].map((d) => (
      <div key={d} className="flex w-[14px] shrink-0 items-center justify-center border-r border-[#888] bg-[#b8b8b8]">
        <svg width="12" height="12" viewBox="0 0 14 13"><path d={d} fill="#999" stroke="#8a8a8a" /></svg>
      </div>
    ))}
    <div className="flex w-[48px] items-center justify-center border-r border-[#888] pb-[2px] font-bold">Model</div>
    <div className="flex w-[55px] items-center justify-center border-r border-[#888] bg-[#d2d2d2] pb-[2px]">3D Views</div>
    <div className="flex w-[90px] items-center border-r border-[#888] bg-[#d2d2d2] pb-[2px] pl-[8px]">Motion Study 1</div>
  </div>
);

export default function App() {
  return (
    <div className="flex h-[865px] w-[1600px] flex-col overflow-hidden bg-[#f7f7f7] font-['Noto_Sans','Open_Sans',sans-serif] text-[10px] leading-none text-[#1c1c1c]">
      <TitleBar />
      <CaptureBar />
      <Ribbon />
      <div className="relative flex min-h-0 flex-1 flex-col">
        <div className="absolute inset-y-0 left-[203px] right-0 bg-white"><Lamp /></div>
        <Hud />
        <DocControls />
        <Tabs />
        <div className="relative flex min-h-0 flex-1">
          <Sidebar />
          <div className="ml-auto flex flex-col justify-between">
            <div className="ml-auto h-[24px] w-px bg-black" />
            <div className="mb-auto flex w-[22px] flex-col border border-r-0 border-[#888] bg-white">
              <div className="flex h-[20px] items-center justify-center border-b border-[#888] bg-[#d2d2d2]"><I s={15}><path d="M2 3L5 1L7 2L9 1L11 2L14 2V12L11 15L8 14L5 14.5L2 13ZM5 4V14M8 5V14M11 5V15M2 3L5 4L8 3M8 5L11 5L14 2" stroke="#222" fill="#eee" /></I></div>
              <div className="flex h-[18px] items-center justify-center"><Ball s={15} /></div>
            </div>
            <div className="ml-auto h-[30px] w-px bg-black" />
          </div>
        </div>
      </div>
      <BottomTabs />
      <div className="flex h-[14px] shrink-0 items-center border-t border-[#999] pl-px pt-px tracking-[-0.2px]">
        <span>laser lamp</span>
        <span className="ml-auto">Editing Part</span>
        <span className="ml-[98px]">MMGS</span>
        <svg width="5" height="3" className="ml-[15px]"><path d="M0 3H5L2.5 0Z" fill="#333" /></svg>
        <span className="ml-[22px] mr-[3px]"><I s={13}><path d="M1 5L6 1L15 6V10L9 15L1 9Z" fill="#ddd" stroke="#333" /><ellipse cx="8" cy="7" rx="3.5" ry="2.2" stroke="#333" transform="rotate(25 8 7)" /><path d="M1 5L9 11V15M9 11L15 6" stroke="#333" /></I></span>
      </div>
    </div>
  );
}
